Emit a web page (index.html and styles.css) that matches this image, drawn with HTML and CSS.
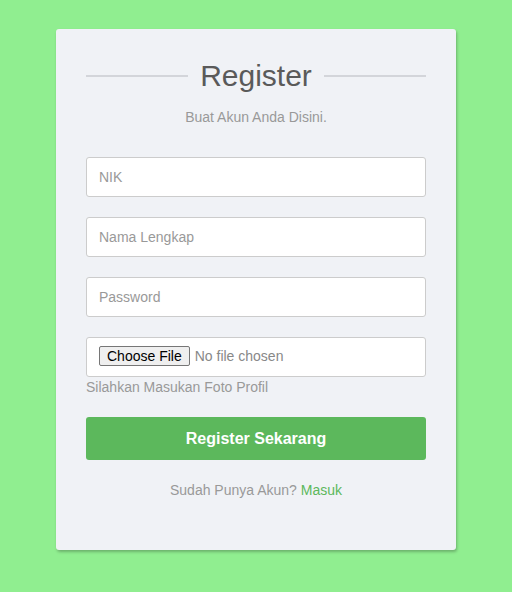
FILE: index.html
```html
<!DOCTYPE html>
<html>
<head>
<meta charset="utf-8">
<link rel="stylesheet" href="styles.css">
</head>
<body>
<div class="card">
  <div class="title-row">
    <span class="rule"></span>
    <h1 class="title">Register</h1>
    <span class="rule"></span>
  </div>
  <p class="subtitle">Buat Akun Anda Disini.</p>
  <form class="form">
    <input class="field" type="text" placeholder="NIK">
    <input class="field" type="text" placeholder="Nama Lengkap">
    <input class="field" type="password" placeholder="Password">
    <div class="file-group">
      <div class="field file-field"><input class="file" type="file"></div>
      <div class="help">Silahkan Masukan Foto Profil</div>
    </div>
    <button class="submit" type="button">Register Sekarang</button>
  </form>
  <p class="footer">Sudah Punya Akun? <a class="link" href="#">Masuk</a></p>
</div>
</body>
</html>
```
FILE: styles.css
```css
html, body {
  margin: 0;
  padding: 0;
}
body {
  background: #90ee90;
  font-family: "Liberation Sans", Arial, sans-serif;
  display: flex;
  justify-content: center;
  padding-top: 29px;
  height: 592px;
  box-sizing: border-box;
}
.card {
  width: 400px;
  height: 521px;
  box-sizing: border-box;
  background: #f0f2f6;
  border-radius: 3px;
  box-shadow: 1px 2px 3px rgba(0,0,0,0.25);
  padding: 30px 30px 0;
  display: flex;
  flex-direction: column;
}
.title-row {
  display: flex;
  align-items: center;
  gap: 12px;
  height: 34px;
}
.rule {
  flex: 1;
  height: 2px;
  background: #d3d5da;
}
.title {
  margin: 0;
  font-weight: normal;
  font-size: 30px;
  line-height: 34px;
  color: #5a5a5a;
}
.subtitle {
  margin: 16px 0 0;
  text-align: center;
  font-size: 14px;
  line-height: 16px;
  color: #999;
}
.form {
  margin-top: 32px;
  display: flex;
  flex-direction: column;
  gap: 20px;
}
.field {
  height: 40px;
  box-sizing: border-box;
  border: 1px solid #ccc;
  border-radius: 3px;
  background: #fff;
  padding: 0 12px;
  font-family: "Liberation Sans", Arial, sans-serif;
  font-size: 14px;
  color: #555;
  outline: none;
  width: 100%;
}
.field::placeholder {
  color: #999;
}
.file-field {
  display: flex;
  align-items: center;
  padding-bottom: 3px;
}
.file {
  font-family: "Liberation Sans", Arial, sans-serif;
  font-size: 14px;
  color: #888;
}
.file::file-selector-button {
  font-family: "Liberation Sans", Arial, sans-serif;
  font-size: 14px;
  color: #000;
  background: #efefef;
  border: 1px solid #767676;
  border-radius: 2px;
  padding: 1px 7px;
  margin-right: 5px;
}
.help {
  font-size: 14px;
  line-height: 20px;
  color: #999;
}
.submit {
  height: 43px;
  border: none;
  border-radius: 3px;
  background: #5cb85c;
  color: #fff;
  font-family: "Liberation Sans", Arial, sans-serif;
  font-weight: bold;
  font-size: 16px;
}
.footer {
  margin: 22px 0 0;
  text-align: center;
  font-size: 14px;
  line-height: 16px;
  color: #999;
}
.link {
  color: #5cb85c;
  text-decoration: none;
}
```
